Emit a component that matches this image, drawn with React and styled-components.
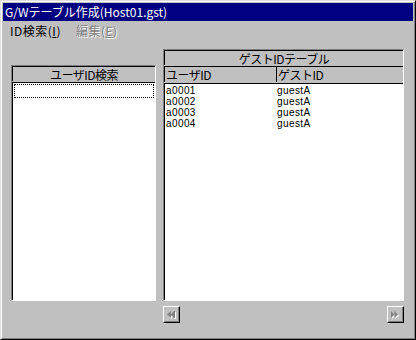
import styled, { createGlobalStyle } from 'styled-components'

const Global = createGlobalStyle`
  body {
    margin: 0;
    background: #ffffff;
    font-family: "Noto Sans CJK JP", "Liberation Sans", sans-serif;
    font-size: 12px;
  }
`

const Window = styled.div`
  width: 416px;
  height: 340px;
  box-sizing: border-box;
  padding: 2px;
  background: #c0c0c0;
  border: 1px solid;
  border-color: #dfdfdf #000000 #000000 #dfdfdf;
  box-shadow: inset 1px 1px #ffffff, inset -1px -1px #808080;
  display: flex;
  flex-direction: column;
`

const TitleBar = styled.div`
  height: 18px;
  background: #000080;
  color: #ffffff;
  display: flex;
  align-items: center;
  padding-left: 2px;
  font-size: 12px;
  line-height: 18px;
`

const MenuBar = styled.div`
  height: 19px;
  display: flex;
  align-items: center;
  padding-left: 7px;
  gap: 15px;
`

const MenuItem = styled.span`
  color: ${p => (p.$disabled ? '#808080' : '#000000')};
  text-shadow: ${p => (p.$disabled ? '1px 1px #ffffff' : 'none')};
  line-height: 19px;
  letter-spacing: 0.5px;
  u { text-decoration: underline; }
`

const Content = styled.div`
  flex: 1;
  display: flex;
  padding: 0 0 0 8px;
  gap: 7px;
`

const LeftCol = styled.div`
  width: 145px;
  padding-top: 25px;
  display: flex;
  flex-direction: column;
`

const RightCol = styled.div`
  width: 241px;
  padding-top: 9px;
  display: flex;
  flex-direction: column;
`

const Frame = styled.div`
  box-sizing: border-box;
  height: ${p => p.$h}px;
  border: 1px solid;
  border-color: #808080 #ffffff #ffffff #808080;
  display: flex;
  flex-direction: column;
  background: #c0c0c0;
`

const Header = styled.div`
  height: ${p => p.$h || 15}px;
  box-sizing: border-box;
  border-top: 1px solid #000000;
  border-left: 1px solid #000000;
  display: flex;
  align-items: center;
  justify-content: ${p => (p.$center ? 'center' : 'flex-start')};
  line-height: 13px;
  letter-spacing: -0.5px;
  margin-bottom: 1px;
`

const HeadCell = styled.div`
  width: ${p => p.$w}px;
  height: 100%;
  box-sizing: border-box;
  padding-left: 1px;
  display: flex;
  align-items: center;
  border-left: ${p => (p.$first ? 'none' : '1px solid #000000')};
`

const List = styled.div`
  flex: 1;
  background: #ffffff;
  border-top: 1px solid #000000;
  border-left: 1px solid #000000;
  padding-top: 1px;
`

const FocusRow = styled.div`
  height: 12px;
  margin: 0 1px;
  border: 1px dotted #000000;
`

const Row = styled.div`
  display: flex;
  height: 11px;
  line-height: 11px;
  font-family: "Liberation Sans", sans-serif;
  font-size: 10px;
  letter-spacing: 0.4px;
  padding-left: 1px;
`

const Cell = styled.span`
  width: ${p => p.$w}px;
`

const ButtonRow = styled.div`
  display: flex;
  justify-content: space-between;
  margin-top: 5px;
`

const NavButton = styled.button`
  width: 17px;
  height: 17px;
  padding: 0;
  background: #c0c0c0;
  border: 1px solid;
  border-color: #ffffff #000000 #000000 #ffffff;
  box-shadow: inset -1px -1px #808080;
  display: flex;
  align-items: center;
  justify-content: center;
`

const FirstIcon = () => (
  <svg width="9" height="8" viewBox="0 0 9 8">
    <g transform="translate(1,1)" fill="#ffffff">
      <polygon points="4,0 4,7 0,3.5" />
      <polygon points="7,0 7,7 3.5,3.5" />
      <rect x="7" y="0" width="1" height="7" />
    </g>
    <g fill="#808080">
      <polygon points="4,0 4,7 0,3.5" />
      <polygon points="7,0 7,7 3.5,3.5" />
      <rect x="7" y="0" width="1" height="7" />
    </g>
  </svg>
)

const LastIcon = () => (
  <svg width="9" height="8" viewBox="0 0 9 8">
    <g transform="translate(1,1)" fill="#ffffff">
      <polygon points="0,0 0,7 3.5,3.5" />
      <polygon points="3.5,0 3.5,7 7,3.5" />
    </g>
    <g fill="#808080">
      <polygon points="0,0 0,7 3.5,3.5" />
      <polygon points="3.5,0 3.5,7 7,3.5" />
    </g>
  </svg>
)

const rows = [
  ['a0001', 'guestA'],
  ['a0002', 'guestA'],
  ['a0003', 'guestA'],
  ['a0004', 'guestA'],
]

export default function App() {
  return (
    <>
      <Global />
      <Window>
        <TitleBar>G/Wテーブル作成(Host01.gst)</TitleBar>
        <MenuBar>
          <MenuItem>ID検索(<u>I</u>)</MenuItem>
          <MenuItem $disabled>編集(<u>E</u>)</MenuItem>
        </MenuBar>
        <Content>
          <LeftCol>
            <Frame $h={236}>
              <Header $center>ユーザID検索</Header>
              <List>
                <FocusRow />
              </List>
            </Frame>
          </LeftCol>
          <RightCol>
            <Frame $h={252}>
              <Header $center>ゲストIDテーブル</Header>
              <Header $h={16}>
                <HeadCell $w={111} $first>ユーザID</HeadCell>
                <HeadCell $w={127}>ゲストID</HeadCell>
              </Header>
              <List>
                {rows.map(r => (
                  <Row key={r[0]}>
                    <Cell $w={111}>{r[0]}</Cell>
                    <Cell $w={120}>{r[1]}</Cell>
                  </Row>
                ))}
              </List>
            </Frame>
            <ButtonRow>
              <NavButton><FirstIcon /></NavButton>
              <NavButton><LastIcon /></NavButton>
            </ButtonRow>
          </RightCol>
        </Content>
      </Window>
    </>
  )
}
